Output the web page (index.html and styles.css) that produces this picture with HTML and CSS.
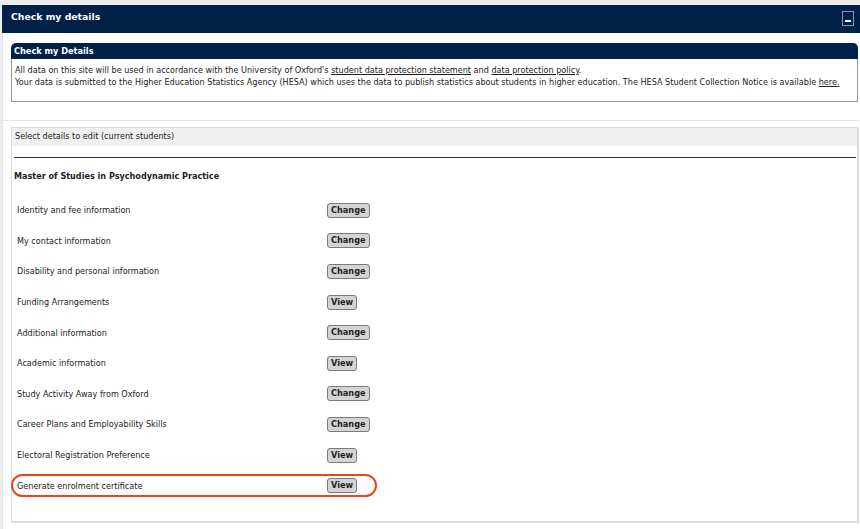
FILE: index.html
```html
<!DOCTYPE html>
<html lang="en">
<head>
  <meta charset="UTF-8">
  <meta name="viewport" content="width=device-width, initial-scale=1.0">
  <title>Check my details</title>
  <link rel="stylesheet" href="styles.css">
</head>
<body>
  <div class="portlet">
    <div class="portlet-header">
      <span class="portlet-title">Check my details</span>
      <span class="minimise"></span>
    </div>
    <div class="portlet-body">
      <div class="info-box">
        <div class="info-header">Check my Details</div>
        <div class="info-text">
          All data on this site will be used in accordance with the University of Oxford's <a href="#">student data protection statement</a> and <a href="#">data protection policy</a>.<br>
          Your data is submitted to the Higher Education Statistics Agency (HESA) which uses the data to publish statistics about students in higher education. The HESA Student Collection Notice is available <a href="#">here.</a>
        </div>
      </div>
    </div>
    <div class="portlet-body second">
      <div class="select-panel">
        <div class="select-header">Select details to edit (current students)</div>
        <div class="select-content">
          <hr class="divider">
          <div class="course">Master of Studies in Psychodynamic Practice</div>
          <div class="rows">
            <div class="row"><span>Identity and fee information</span><button>Change</button></div>
            <div class="row"><span>My contact information</span><button>Change</button></div>
            <div class="row"><span>Disability and personal information</span><button>Change</button></div>
            <div class="row"><span>Funding Arrangements</span><button>View</button></div>
            <div class="row"><span>Additional information</span><button>Change</button></div>
            <div class="row"><span>Academic information</span><button>View</button></div>
            <div class="row"><span>Study Activity Away from Oxford</span><button>Change</button></div>
            <div class="row"><span>Career Plans and Employability Skills</span><button>Change</button></div>
            <div class="row"><span>Electoral Registration Preference</span><button>View</button></div>
            <div class="row highlight"><span>Generate enrolment certificate</span><button>View</button></div>
          </div>
        </div>
      </div>
    </div>
  </div>
</body>
</html>
```

FILE: styles.css
```css
body {
  margin: 0;
  background: #ececec;
  font-family: "DejaVu Sans", Verdana, sans-serif;
  font-size: 8.1px;
  color: #222;
}
.portlet {
  margin: 5px 0 0 2px;
  background: #fff;
}
.portlet-header {
  height: 28px;
  background: #002147;
  display: flex;
  justify-content: space-between;
  align-items: flex-start;
  padding: 0 6px 0 9px;
}
.portlet-title {
  color: #fff;
  font-weight: bold;
  font-size: 9.3px;
  margin-top: 6px;
}
.minimise {
  position: relative;
  width: 10px;
  height: 13px;
  margin-top: 6px;
  border: 1px solid #7f93b3;
}
.minimise::after {
  content: "";
  position: absolute;
  left: 2px;
  right: 2px;
  bottom: 3px;
  height: 2px;
  background: #fff;
}
.portlet-body {
  border-left: 1px solid #e2e2e2;
  padding: 10px 2px 18px 8px;
}
.portlet-body.second {
  border-top: 1px solid #e6e6e6;
  padding: 6px 1px 8px 8px;
}
.info-header {
  background: #002147;
  color: #fff;
  font-weight: bold;
  font-size: 8.2px;
  height: 16px;
  line-height: 16px;
  padding-left: 3px;
  border-radius: 5px 5px 0 0;
}
.info-text {
  border: 1px solid #999;
  border-top: none;
  padding: 5px 2px 0 3px;
  height: 37px;
  line-height: 12px;
}
.info-text a {
  color: #222;
}
.select-panel {
  border: 1px solid #dcdcdc;
  border-right-width: 2px;
  border-bottom-width: 2px;
}
.select-header {
  background: #f0f0f0;
  height: 18px;
  line-height: 17px;
  padding-left: 3px;
}
.select-content {
  padding: 11px 1px 20px 2px;
}
.divider {
  margin: 0;
  border: none;
  border-top: 1px solid #333;
}
.course {
  font-weight: bold;
  margin-top: 12px;
  line-height: 12px;
}
.rows {
  margin-top: 13px;
}
.row {
  position: relative;
  display: grid;
  grid-template-columns: 310px auto;
  align-items: center;
  justify-items: start;
  height: 30.6px;
  padding-left: 3px;
}
button {
  font-family: "DejaVu Sans", Verdana, sans-serif;
  font-size: 8.2px;
  font-weight: bold;
  color: #222;
  background: #d4d4d4;
  border: 1px solid #7b7b7b;
  border-radius: 3px;
  padding: 0 3px;
  height: 15px;
  line-height: 13px;
}
.highlight::after {
  content: "";
  position: absolute;
  left: -3px;
  top: 4px;
  width: 362px;
  height: 19px;
  border: 2.5px solid #e5461f;
  border-radius: 12px;
}
```
